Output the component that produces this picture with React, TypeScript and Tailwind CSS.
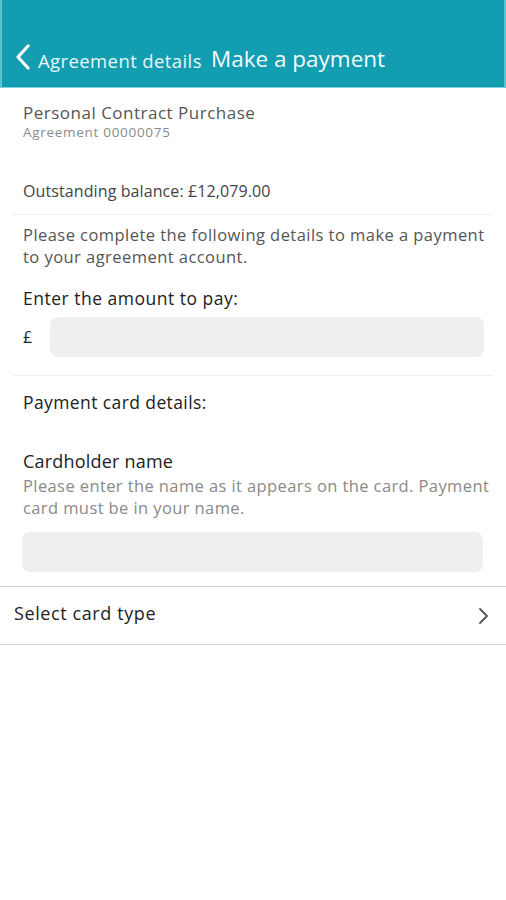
export default function App() {
  return (
    <div className="min-h-[900px] bg-white font-['Open_Sans',sans-serif]">
      <header className="h-[88px] bg-[#129db0] border-x-2 border-[#5cc3d0] border-b border-b-[#7fd3dd] flex items-end pb-[17px] pl-[11px]">
        <svg width="20" height="26" viewBox="0 0 20 26" className="shrink-0">
          <path d="M15 2 L5 13 L15 24" fill="none" stroke="#ffffff" strokeWidth="3.2" strokeLinecap="round" strokeLinejoin="round" />
        </svg>
        <span className="text-[#e9f7f9] text-[18.5px] tracking-[0.4px] ml-[5px] leading-none">Agreement details</span>
        <span className="text-[#f4fbfc] text-[22.5px] ml-[9px] leading-none">Make a payment</span>
      </header>

      <section className="px-[23px] pt-[14px]">
        <div className="text-[17px] tracking-[0.5px] text-[#555] leading-[22px]">Personal Contract Purchase</div>
        <div className="text-[13.5px] tracking-[0.7px] text-[#8a8a8a] leading-[16px]">Agreement 00000075</div>
      </section>

      <div className="mx-[13px] border-b border-[#eeeeee] pl-[10px] pt-[40px] pb-[12px] text-[16px] tracking-[0.1px] text-[#444] leading-[22px]">
        Outstanding balance: £12,079.00
      </div>

      <section className="mx-[13px] border-b border-[#eeeeee] pl-[10px] pr-[9px] pt-[9px] pb-[18px]">
        <p className="mr-[-3px] text-[16.5px] tracking-[0.45px] text-[#555] leading-[22px]">
          Please complete the following details to make a payment to your agreement account.
        </p>
        <div className="mt-[19px] text-[17.5px] tracking-[0.5px] text-[#222] leading-[22px]">Enter the amount to pay:</div>
        <div className="mt-[8px] flex items-center">
          <span className="w-[27px] text-[16px] text-[#222]">£</span>
          <div className="flex-1 h-[40px] rounded-[8px] bg-[#eeeff0]" />
        </div>
      </section>

      <section className="px-[23px] pt-[15px] pb-[14px]">
        <div className="text-[17.5px] tracking-[0.4px] text-[#222] leading-[22px]">Payment card details:</div>
        <div className="mt-[37px] text-[18px] tracking-[0.2px] text-[#222] leading-[22px]">Cardholder name</div>
        <p className="mt-[3px] mr-[-8px] text-[16.5px] tracking-[0.4px] text-[#8a8a8a] leading-[22px]">
          Please enter the name as it appears on the card. Payment card must be in your name.
        </p>
        <div className="mt-[13px] ml-[-1px] h-[40px] rounded-[8px] bg-[#eeeff0]" />
      </section>

      <div className="border-y border-[#cfcfcf] h-[59px] flex items-center justify-between pl-[14px] pr-[17px] pb-[4px]">
        <span className="text-[18px] tracking-[0.6px] text-[#222]">Select card type</span>
        <svg width="12" height="18" viewBox="0 0 12 18" className="shrink-0 mt-[4px]">
          <path d="M3 2 L10 9 L3 16" fill="none" stroke="#555" strokeWidth="1.8" strokeLinecap="round" strokeLinejoin="round" />
        </svg>
      </div>
    </div>
  );
}
